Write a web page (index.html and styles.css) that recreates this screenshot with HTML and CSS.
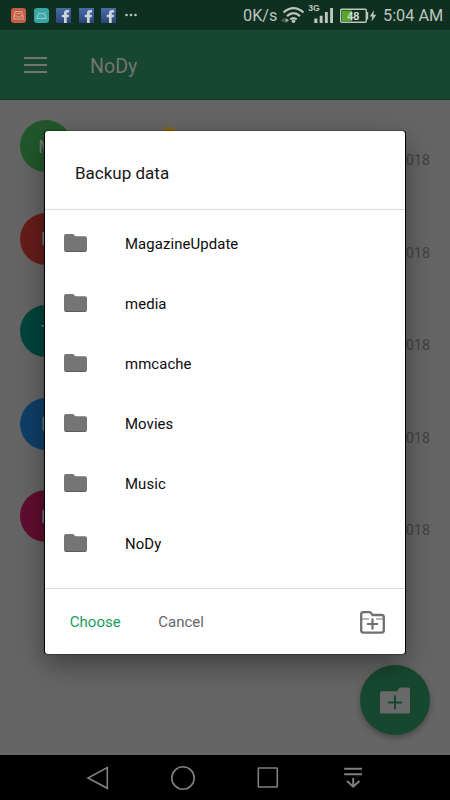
FILE: index.html
```html
<!DOCTYPE html>
<html lang="en">
<head>
<meta charset="utf-8">
<title>NoDy</title>
<link rel="stylesheet" href="styles.css">
</head>
<body>
<svg width="0" height="0" class="defs">
  <symbol id="folder" viewBox="0 0 23 18"><path d="M2 0H9L11.5 2.2H21Q23 2.2 23 4.2V16Q23 18 21 18H2Q0 18 0 16V2Q0 0 2 0Z" fill="#757575"/><path d="M1.5 17.5H21.5" stroke="#5d5d5d"/></symbol>
</svg>
<div class="screen">
  <div class="status">
    <div class="notices">
      <svg class="tile" viewBox="0 0 15 15"><rect width="15" height="15" rx="3" fill="#c75d43"/><path d="M4.5 3.5H10.5L12 8V11H3V8ZM3 8H5.5Q7.5 10.5 9.5 8H12M5.5 5.5H9.5" fill="none" stroke="#d5aa9c" stroke-width="1.1"/></svg>
      <svg class="tile" viewBox="0 0 15 15"><rect width="15" height="15" rx="3" fill="#37a5a5"/><path d="M3 10.5Q3 5.5 7.5 5.5T12 10.5ZM4.5 5 3.8 4M10.5 5 11.2 4M5.5 8.3H6.5M8.5 8.3H9.5" fill="none" stroke="#9bd0cd" stroke-width="1.1"/></svg>
      <span class="tile fb"><svg width="15" height="15"><path d="M8 15V9.2H5.8V6.7H8V5Q8 2 11.2 2H13V4.6H11.7Q10.7 4.6 10.7 5.6V6.7H13L12.6 9.2H10.7V15Z"/></svg></span>
      <span class="tile fb"><svg width="15" height="15"><path d="M8 15V9.2H5.8V6.7H8V5Q8 2 11.2 2H13V4.6H11.7Q10.7 4.6 10.7 5.6V6.7H13L12.6 9.2H10.7V15Z"/></svg></span>
      <span class="tile fb"><svg width="15" height="15"><path d="M8 15V9.2H5.8V6.7H8V5Q8 2 11.2 2H13V4.6H11.7Q10.7 4.6 10.7 5.6V6.7H13L12.6 9.2H10.7V15Z"/></svg></span>
      <svg class="dots" width="12" height="4" viewBox="0 0 12 4" fill="#b9c4be"><circle cx="1.5" cy="2" r="1.3"/><circle cx="6" cy="2" r="1.3"/><circle cx="10.5" cy="2" r="1.3"/></svg>
    </div>
    <span class="speed">0K/s</span>
    <svg class="signals" width="100" height="30" viewBox="280 0 100 30">
      <g fill="none" stroke="#bcc5c0" stroke-width="2.2"><path d="M283.5 12.5Q293.5 3.8 303.5 12.5M287 16.1Q293.5 10.3 300 16.1M290.3 19.4Q293.5 16.7 296.7 19.4"/></g>
      <circle cx="293.5" cy="21.3" r="1.8" fill="#bcc5c0"/>
      <path d="M281 20.3 284.5 18V22.7Z" fill="#52665b"/><path d="M289 20.3 285.5 18V22.7Z" fill="#a5b0aa"/>
      <path d="M314.3 18.5H317.4V23H314.3ZM319.7 15.7H322.6V23H319.7ZM324.9 12H327.8V23H324.9ZM330.1 8H333V23H330.1Z" fill="#bcc5c0"/>
      <text x="308.3" y="11.2" class="net">3G</text>
      <rect x="340.7" y="9.2" width="25.6" height="13" rx="1" fill="#0f3020" stroke="#bcc5c0" stroke-width="1.4"/>
      <path d="M342 10.5H352V21H342Z" fill="#59a524"/><path d="M366.5 12H368.2V19.5H366.5Z" fill="#bcc5c0"/>
      <text x="353.2" y="19.6" text-anchor="middle" class="charge">48</text>
      <path d="M374 10 369.8 16.4H372.4L371.4 21.7 376.3 14.8H373.4Z" fill="#bcc5c0"/>
    </svg>
    <span class="clock">5:04 AM</span>
  </div>
  <div class="appbar">
    <div class="menu"><i></i><i></i><i></i></div>
    <span class="title">NoDy</span>
  </div>
  <div class="content">
    <div class="entry"><span class="avatar green">M</span><span class="coin"></span><span class="date">2018</span></div>
    <div class="entry"><span class="avatar red">F</span><span class="date">2018</span></div>
    <div class="entry"><span class="avatar teal">T</span><span class="date">2018</span></div>
    <div class="entry"><span class="avatar blue">F</span><span class="date">2018</span></div>
    <div class="entry"><span class="avatar pink">F</span><span class="date">2018</span></div>
  </div>
  <div class="fab"><svg width="30" height="27" viewBox="0 0 30 27"><path d="M1.5 4.3H17L19.5 .5H28.5Q30 .5 30 2V25Q30 26.5 28.5 26.5H1.5Q0 26.5 0 25V6Q0 4.3 1.5 4.3Z" fill="#696969"/><path d="M8 15.5H22M15 8.5V22.3" stroke="#17482f" stroke-width="2"/></svg></div>
  <div class="nav">
    <svg width="24" height="24" viewBox="0 0 24 24"><path d="M21.3 1.5V22.3L2 12Z"/></svg>
    <svg width="24" height="24" viewBox="0 0 24 24"><circle cx="12" cy="12" r="11.2"/></svg>
    <svg width="24" height="24" viewBox="0 0 24 24"><rect x="2.3" y="2" width="19" height="19" rx=".5"/></svg>
    <svg width="24" height="24" viewBox="0 0 24 24"><path d="M3.2 2.8H21M3.2 8.2H21M12.2 12V21M6 15 12.2 20.7 18.4 15" stroke-width="2"/></svg>
  </div>
  <div class="dialog">
    <h1>Backup data</h1>
    <ul>
      <li><svg><use href="#folder"/></svg>MagazineUpdate</li>
      <li><svg><use href="#folder"/></svg>media</li>
      <li><svg><use href="#folder"/></svg>mmcache</li>
      <li><svg><use href="#folder"/></svg>Movies</li>
      <li><svg><use href="#folder"/></svg>Music</li>
      <li><svg><use href="#folder"/></svg>NoDy</li>
    </ul>
    <div class="actions">
      <span class="choose">Choose</span><span class="cancel">Cancel</span>
      <svg class="create" width="25" height="23" viewBox="0 0 25 23" fill="none" stroke="#707070"><path d="M3.5 1.2H9.5Q11 1.2 12 3.4L12.5 4H21.5Q23.8 4 23.8 6.3V19.3Q23.8 21.7 21.5 21.7H3.5Q1.2 21.7 1.2 19.3V3.5Q1.2 1.2 3.5 1.2Z" stroke-width="2.3"/><path d="M2 8H9M16 8H23" stroke-width="1"/><path d="M7 13H18M12.5 7.5V18.5" stroke-width="2.2"/></svg>
    </div>
  </div>
</div>
</body>
</html>
```

FILE: styles.css
```css
* { box-sizing: border-box; }
body { margin: 0; font-family: Roboto, sans-serif; }
.defs { position: absolute; }
.screen { position: relative; width: 450px; height: 800px; overflow: hidden; background: #656565; display: flex; flex-direction: column; }
.status { height: 30px; flex: none; background: #0f3020; color: #bcc5c0; display: flex; align-items: center; font-size: 16.3px; padding-left: 11px; }
.notices { display: flex; align-items: center; gap: 7.5px; width: 232px; }
.tile { width: 15px; height: 15px; flex: none; }
.fb { background: linear-gradient(#496ba8, #294678); }
.fb svg { display: block; fill: #d0d5dc; }
.dots { margin-left: 1px; }
.speed { width: 37px; padding-top: 1px; white-space: nowrap; }
.signals { flex: none; }
.net { font: bold 8.6px "Liberation Sans", sans-serif; fill: #bcc5c0; }
.charge { font: bold 10.8px "Liberation Sans", sans-serif; fill: #d5ddd5; }
.clock { margin-left: 3px; padding-top: 1px; white-space: nowrap; }
.appbar { height: 70px; flex: none; background: #17482f; border-bottom: 1px solid #123d27; color: #747474; font-size: 19.6px; display: flex; align-items: center; padding: 2px 0 0 23.5px; }
.title { padding-top: 2px; }
.menu { width: 66.5px; padding-bottom: 1px; }
.menu i { display: block; width: 23px; height: 2px; background: #747474; margin-bottom: 5px; }
.menu i:last-child { margin-bottom: 0; }
.content { flex: 1; padding: 20px 20px 0; }
.entry { height: 92.6px; display: flex; }
.avatar { width: 52px; height: 52px; border-radius: 50%; display: grid; place-items: center; color: #707970; font-size: 18px; }
.green { background: #22572a; }
.red { background: #651d19; }
.teal { background: #00443c; }
.blue { background: #0e3f68; }
.pink { background: #5f0d2e; }
.coin { width: 17px; height: 17px; border-radius: 50%; background: #8d6710; margin: 7px 0 0 89px; }
.date { margin: 31px 0 0 auto; font-size: 14px; line-height: 18px; color: #404040; letter-spacing: .15px; }
.fab { position: absolute; left: 360px; top: 665px; width: 70px; height: 70px; border-radius: 50%; background: #17482f; display: grid; place-items: center; box-shadow: 0 3px 6px rgba(0,0,0,.3); }
.nav { height: 45px; flex: none; background: #000; display: flex; gap: 61px; padding: 10.5px 0 0 86px; fill: none; stroke: #808080; stroke-width: 1.6; }
.dialog { position: absolute; left: 45px; top: 131px; width: 360px; height: 523px; border-radius: 3px; background: #fff; display: flex; flex-direction: column; box-shadow: -1px 0 #000, 1px 0 #000, 0 0 0 1px rgba(0,0,0,.25), 0 10px 28px rgba(0,0,0,.4); }
h1 { margin: 0; height: 79px; border-bottom: 1px solid #dcdcdc; padding: 30px 30px 0; font-size: 17px; line-height: 24px; font-weight: 400; color: #181818; }
ul { margin: 0; padding: 3px 0 0; height: 378px; list-style: none; }
li { height: 60px; display: flex; align-items: center; padding: 2px 0 0 18.5px; font-size: 14.9px; color: #0b0b0b; letter-spacing: .1px; }
li svg { width: 23px; height: 18px; margin: -3px 38.5px 0 0; }
.actions { flex: 1; border-top: 1px solid #dcdcdc; display: flex; align-items: center; padding: 1px 20px 0 24.8px; font-size: 15px; }
.choose { width: 88.5px; color: #14a05b; }
.cancel { color: #666; }
.create { margin: 0 0 0 auto; }
```
